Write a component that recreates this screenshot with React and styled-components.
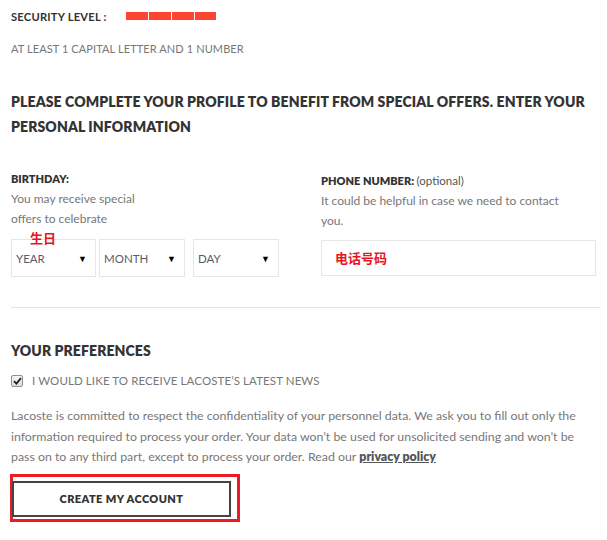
import React from "react";
import styled, { createGlobalStyle } from "styled-components";

const Global = createGlobalStyle`
  html, body { margin: 0; padding: 0; background: #fff; }
  body { font-family: Lato, "Open Sans", "Noto Sans", sans-serif; color: #333; }
`;

const Page = styled.div`
  width: 607px;
  height: 540px;
  box-sizing: border-box;
  padding: 9px 3px 0 11px;
  overflow: hidden;
`;

const SecurityRow = styled.div`
  display: flex;
  align-items: center;
  height: 14px;
`;

const Label = styled.span`
  font-size: 11.2px;
  font-weight: 700;
  color: #333;
  letter-spacing: 0.2px;
  width: 115px;
`;

const Meter = styled.div`
  display: flex;
  gap: 1px;
`;

const Seg = styled.div`
  width: ${(p) => p.w}px;
  height: 8px;
  background: #fd4431;
`;

const Hint = styled.div`
  margin-top: 19px;
  font-size: 11px;
  color: #777;
  letter-spacing: 0.1px;
  line-height: 14px;
`;

const Heading = styled.h2`
  margin: 33px 0 0;
  font-size: 14px;
  font-weight: 800;
  line-height: 25px;
  color: #333;
  letter-spacing: 0.12px;
`;

const Columns = styled.div`
  display: grid;
  grid-template-columns: 310px 1fr;
  margin-top: 33px;
`;

const Col = styled.div`
  display: flex;
  flex-direction: column;
`;

const FieldTitle = styled.div`
  font-size: 11px;
  font-weight: 800;
  color: #333;
  line-height: 14px;
  margin-top: ${(p) => p.mt || 0}px;
  span { font-weight: 400; color: #555; font-size: 11.5px; }
`;

const FieldText = styled.div`
  font-size: 12px;
  color: #777;
  line-height: 20px;
  margin-top: 3px;
  width: ${(p) => p.w};
`;

const Cjk = styled.span`
  font-family: "Noto Sans CJK SC", sans-serif;
  font-weight: 700;
  color: #e8141c;
  font-size: 13px;
  line-height: 14px;
`;

const BirthCjk = styled(Cjk)`
  display: block;
  margin: 2px 0 -6px 19px;
  position: relative;
  z-index: 1;
`;

const Selects = styled.div`
  display: flex;
  gap: 3px;
`;

const SelectBox = styled.div`
  box-sizing: border-box;
  width: ${(p) => p.w}px;
  margin-left: ${(p) => p.ml || 0}px;
  height: 38px;
  border: 1px solid #e6e6e6;
  display: flex;
  align-items: center;
  justify-content: space-between;
  padding: 0 8px 0 4px;
  font-size: 11.5px;
  color: #5b5b6b;
`;

const Arrow = styled.span`
  font-size: 9px;
  color: #000;
`;

const PhoneBox = styled.div`
  box-sizing: border-box;
  height: 36px;
  margin-top: 9px;
  width: 275px;
  border: 1px solid #e6e6e6;
  display: flex;
  align-items: center;
  padding-left: 13px;
`;

const Divider = styled.hr`
  border: 0;
  border-top: 1px solid #e3e3e3;
  margin: 30px 4px 0 0;
`;

const SubHeading = styled.h3`
  margin: 35px 0 0;
  font-size: 14px;
  font-weight: 800;
  color: #333;
  line-height: 16px;
  letter-spacing: 0.1px;
`;

const CheckRow = styled.label`
  display: flex;
  align-items: center;
  gap: 9px;
  margin-top: 15px;
  font-size: 11.5px;
  color: #777;
  letter-spacing: 0.1px;
`;

const CheckBox = styled.span`
  box-sizing: border-box;
  width: 12px;
  height: 12px;
  border: 1px solid #8f8f8f;
  border-radius: 2px;
  background: linear-gradient(#f4f4f4, #dcdcdc);
  display: flex;
  align-items: center;
  justify-content: center;
`;

const Paragraph = styled.p`
  margin: 19px 0 0;
  font-size: 12.35px;
  line-height: 20.5px;
  color: #777;
  width: 580px;
  a { color: #555; font-weight: 800; text-decoration: underline; }
`;

const Highlight = styled.div`
  box-sizing: border-box;
  margin: 6px 0 0 -1px;
  width: 230px;
  height: 48px;
  border: 3px solid #ec1c24;
  padding: 4px 6px 2px 0px;
  display: flex;
`;

const Button = styled.button`
  flex: 1;
  margin-left: -1px;
  background: #fff;
  border: 2px solid #444;
  font-family: inherit;
  font-size: 11px;
  font-weight: 800;
  letter-spacing: 0.4px;
  color: #333;
  cursor: pointer;
`;

export default function App() {
  return (
    <>
      <Global />
      <Page>
        <SecurityRow>
          <Label>SECURITY LEVEL :</Label>
          <Meter>
            <Seg w={22} />
            <Seg w={22} />
            <Seg w={22} />
            <Seg w={21} />
          </Meter>
        </SecurityRow>
        <Hint>AT LEAST 1 CAPITAL LETTER AND 1 NUMBER</Hint>
        <Heading>
          PLEASE COMPLETE YOUR PROFILE TO BENEFIT FROM SPECIAL OFFERS. ENTER YOUR
          PERSONAL INFORMATION
        </Heading>
        <Columns>
          <Col>
            <FieldTitle>BIRTHDAY:</FieldTitle>
            <FieldText w="135px">You may receive special offers to celebrate</FieldText>
            <BirthCjk>生日</BirthCjk>
            <Selects>
              <SelectBox w={85}>YEAR<Arrow>▼</Arrow></SelectBox>
              <SelectBox w={86}>MONTH<Arrow>▼</Arrow></SelectBox>
              <SelectBox w={86} ml={5}>DAY<Arrow>▼</Arrow></SelectBox>
            </Selects>
          </Col>
          <Col>
            <FieldTitle mt={2}>PHONE NUMBER: <span>(optional)</span></FieldTitle>
            <FieldText w="260px">It could be helpful in case we need to contact you.</FieldText>
            <PhoneBox><Cjk>电话号码</Cjk></PhoneBox>
          </Col>
        </Columns>
        <Divider />
        <SubHeading>YOUR PREFERENCES</SubHeading>
        <CheckRow>
          <CheckBox>
            <svg width="9" height="8" viewBox="0 0 9 8">
              <path d="M1 4.2 L3.4 6.6 L8 1.2" fill="none" stroke="#222" strokeWidth="1.8" />
            </svg>
          </CheckBox>
          I WOULD LIKE TO RECEIVE LACOSTE’S LATEST NEWS
        </CheckRow>
        <Paragraph>
          Lacoste is committed to respect the confidentiality of your personnel data. We ask you to fill out only the
          information required to process your order. Your data won’t be used for unsolicited sending and won’t be
          pass on to any third part, except to process your order. Read our <a>privacy policy</a>
        </Paragraph>
        <Highlight>
          <Button>CREATE MY ACCOUNT</Button>
        </Highlight>
      </Page>
    </>
  );
}
